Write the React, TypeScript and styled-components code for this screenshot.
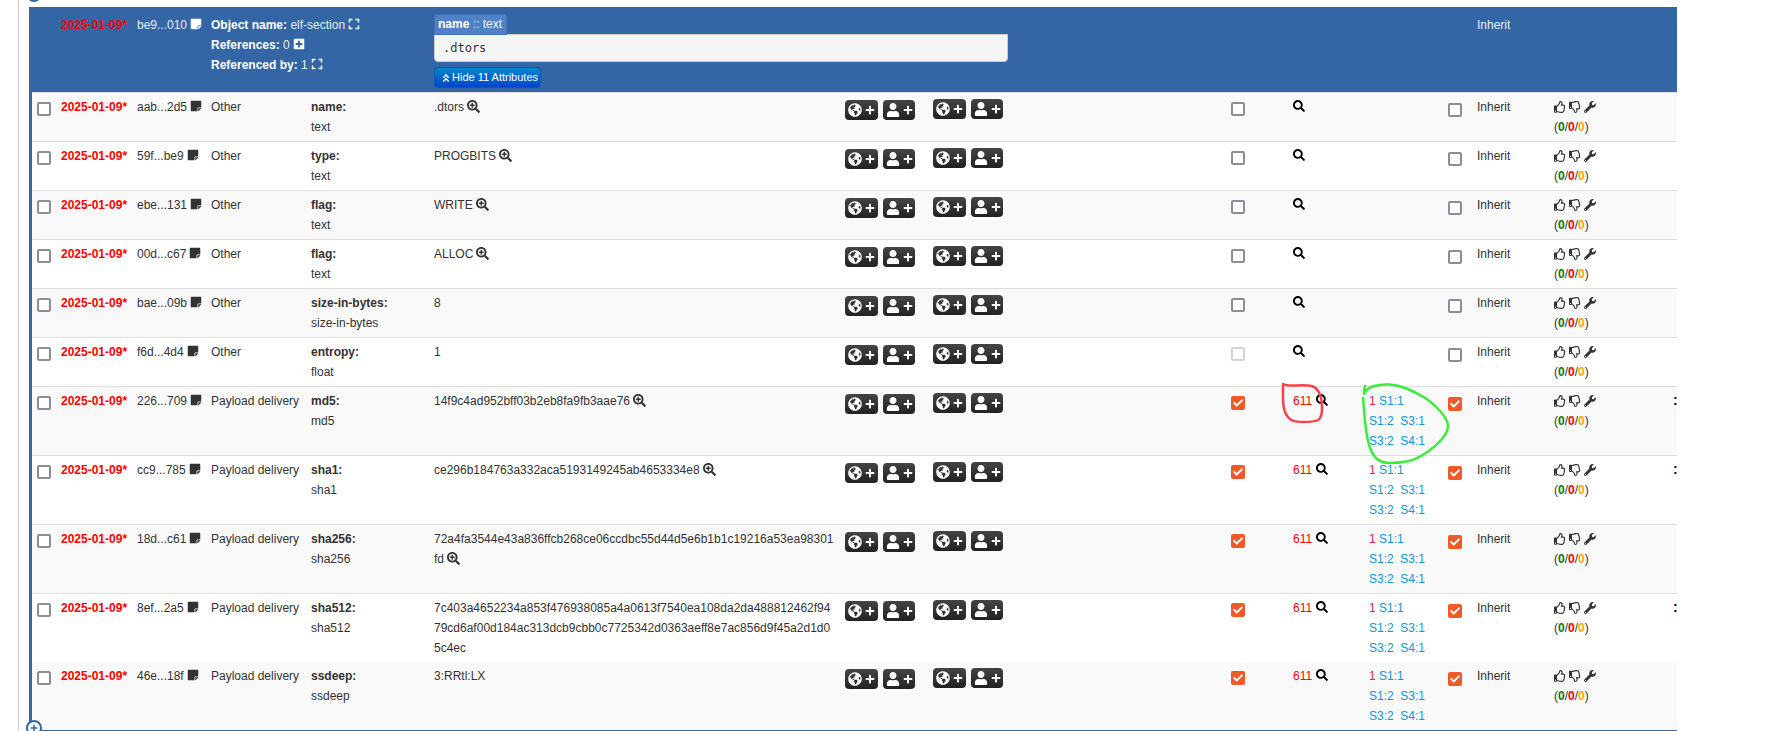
import React from "react";
import styled, { createGlobalStyle, css } from "styled-components";
import {
  FaStickyNote,
  FaSearchPlus,
  FaSearch,
  FaGlobeAmericas,
  FaUser,
  FaPlus,
  FaCheck,
  FaRegThumbsUp,
  FaRegThumbsDown,
  FaWrench,
  FaExpand,
  FaPlusSquare,
  FaAngleDoubleUp,
} from "react-icons/fa";

const BLUE = "#3465a4";

const Global = createGlobalStyle`
  html, body { margin: 0; padding: 0; height: 100%; overflow: hidden; background: #fff; }
  body { font: 12px/20px "Liberation Sans", Arial, sans-serif; color: #333; }
  * { box-sizing: border-box; }
`;

const Page = styled.div`
  position: relative;
  height: 731px;
  padding-left: 18px;
  overflow: hidden;
`;

const Rail = styled.div`
  height: 100%;
  padding: 7px 0 0 10px;
  border-left: 1px solid #ccc;
`;

const Table = styled.div`
  position: relative;
  width: 1648px;
  height: 724px;
  border-left: 3px solid ${BLUE};
  border-bottom: 1px solid ${BLUE};
`;

const COLUMNS = "29px 76px 74px 100px 123px 411px 88px 298px 62px 76px 79px 29px 77px 120px 3px";

const HeaderRow = styled.div`
  display: grid;
  grid-template-columns: ${COLUMNS};
  height: 85px;
  margin-left: -3px;
  padding-left: 3px;
  width: 1648px;
  background: ${BLUE};
  color: #fff;
`;

const HeaderCell = styled.div<{ $span?: number }>`
  padding-top: 8px;
  grid-column: span ${(p) => p.$span ?? 1};
`;

const HeaderAttr = styled.div`
  grid-column: span 7;
  padding-top: 7px;
  display: flex;
  flex-direction: column;
  align-items: flex-start;
`;

const Pill = styled.div`
  height: 21px;
  padding: 0 5px 0 4px;
  line-height: 20px;
  background: #4f81c7;
  border-radius: 4px 4px 0 0;
  box-shadow: inset 0 0 0 1px #4674b4;
  color: #eef3fa;
  position: relative;
  z-index: 1;
  b { color: #fff; }
`;

const AttrValue = styled.div`
  width: 574px;
  height: 28px;
  margin-top: -1px;
  padding: 0 8px;
  background: #f5f5f5;
  border: 1px solid #ccc;
  border-radius: 0 0 4px 4px;
  font: 12px/26px "DejaVu Sans Mono", monospace;
  color: #333;
`;

const HideButton = styled.div`
  display: flex;
  align-items: center;
  gap: 1px;
  width: 107px;
  height: 21px;
  margin-top: 5px;
  padding-left: 6px;
  border: 1px solid #0a58b0;
  border-radius: 4px;
  background: linear-gradient(#0088cc, #0044cc);
  color: #fff;
  font-size: 11px;
  line-height: 19px;
  white-space: nowrap;
  svg { flex: none; width: 10px; height: 10px; }
`;

const DimText = styled.span`
  color: #e8edf5;
`;

const HeaderIcon = styled.span`
  display: inline-block;
  margin-left: 3px;
  vertical-align: -1px;
  color: #fff;
  svg { display: block; width: 12px; height: 12px; }
`;

const Rows = styled.div`
  overflow: hidden;
  height: 638px;
`;

const Row = styled.div<{ $odd: boolean; $flat?: boolean }>`
  display: grid;
  grid-template-columns: ${COLUMNS};
  padding: 4px 0;
  border-top: ${(p) => (p.$flat ? "none" : "1px solid #ddd")};
  background: ${(p) => (p.$odd ? "#f9f9f9" : "#fff")};
`;

const Cell = styled.div``;

const BoxCell = styled.div<{ $inset?: number }>`
  padding-left: ${(p) => p.$inset ?? 0}px;
`;

const Check = styled.span<{ $state: "off" | "on" | "disabled"; $top?: number }>`
  display: flex;
  align-items: center;
  justify-content: center;
  width: 14px;
  height: 14px;
  margin-top: ${(p) => p.$top ?? 5}px;
  border-radius: 2px;
  ${(p) =>
    p.$state === "on"
      ? css`
          background: #f05a28;
          color: #fff;
          svg { width: 10px; height: 10px; }
        `
      : css`
          background: #fff;
          border: 2px solid ${p.$state === "off" ? "#8e8c9a" : "#d4d4d8"};
        `}
`;

const DateText = styled.span`
  color: #f00;
  font-weight: bold;
`;

const Uuid = styled.div`
  white-space: nowrap;
`;

const NoteIcon = styled(FaStickyNote)`
  width: 12px;
  height: 12px;
  margin-left: 3px;
  vertical-align: -1px;
  color: #333;
`;

const WhiteNote = styled(NoteIcon)`
  color: #fff;
`;

const Value = styled.div`
  padding-right: 10px;
  word-break: break-all;
`;

const Zoom = styled(FaSearchPlus)`
  width: 13px;
  height: 13px;
  margin-left: 3px;
  vertical-align: -2px;
  color: #333;
`;

const TagGroup = styled.div<{ $top: number }>`
  display: flex;
  gap: 5px;
  margin-top: ${(p) => p.$top}px;
`;

const TagButton = styled.span`
  display: flex;
  align-items: center;
  justify-content: center;
  gap: 3px;
  width: 32px;
  height: 20px;
  border-radius: 4px;
  background: linear-gradient(#444, #222);
  color: #fff;
  &:first-child { width: 33px; }
`;

const TagIcon = styled.span`
  display: flex;
  svg { width: 14px; height: 14px; }
`;

const TagPlus = styled(FaPlus)`
  width: 10px;
  height: 10px;
`;

const Count = styled.span`
  color: #f00;
  margin-right: 4px;
`;

const Lens = styled(FaSearch)`
  width: 12px;
  height: 12px;
  vertical-align: -1px;
  color: #000;
`;

const Sighting = styled.span`
  color: #0f96dc;
`;

const SightRed = styled.span`
  color: #f02050;
`;

const Vote = styled.div`
  display: flex;
  gap: 3px;
  height: 20px;
  align-items: center;
  color: #333;
  svg { width: 12px; height: 12px; }
`;

const Tally = styled.div``;

const Num = styled.b<{ $c: string }>`
  color: ${(p) => p.$c};
`;

const Sliver = styled.div`
  font-weight: bold;
  font-size: 14px;
  color: #111;
  margin-left: -1px;
  line-height: 18px;
`;

const Toggle = styled.span<{ $y: number }>`
  position: absolute;
  left: 26px;
  top: ${(p) => p.$y}px;
  width: 16px;
  height: 16px;
  border: 2px solid #2f6aa5;
  border-radius: 50%;
  background: #fff;
  display: flex;
  align-items: center;
  justify-content: center;
  color: ${BLUE};
  svg { width: 8px; height: 8px; }
`;

const Scribble = styled.svg`
  position: absolute;
  left: 0;
  top: 0;
  width: 1769px;
  height: 731px;
  pointer-events: none;
  fill: none;
  stroke-width: 2.5;
  stroke-linecap: round;
  stroke-linejoin: round;
`;

type Attr = {
  uuid: string;
  cat: string;
  name: string;
  type: string;
  value: string;
  hit?: boolean;
  zoom?: boolean;
  sliver?: boolean;
  disabled?: boolean;
};

const attrs: Attr[] = [
  { uuid: "aab...2d5", cat: "Other", name: "name:", type: "text", value: ".dtors", zoom: true },
  { uuid: "59f...be9", cat: "Other", name: "type:", type: "text", value: "PROGBITS", zoom: true },
  { uuid: "ebe...131", cat: "Other", name: "flag:", type: "text", value: "WRITE", zoom: true },
  { uuid: "00d...c67", cat: "Other", name: "flag:", type: "text", value: "ALLOC", zoom: true },
  { uuid: "bae...09b", cat: "Other", name: "size-in-bytes:", type: "size-in-bytes", value: "8" },
  { uuid: "f6d...4d4", cat: "Other", name: "entropy:", type: "float", value: "1", disabled: true },
  { uuid: "226...709", cat: "Payload delivery", name: "md5:", type: "md5", value: "14f9c4ad952bff03b2eb8fa9fb3aae76", hit: true, zoom: true, sliver: true },
  { uuid: "cc9...785", cat: "Payload delivery", name: "sha1:", type: "sha1", value: "ce296b184763a332aca5193149245ab4653334e8", hit: true, zoom: true, sliver: true },
  { uuid: "18d...c61", cat: "Payload delivery", name: "sha256:", type: "sha256", value: "72a4fa3544e43a836ffcb268ce06ccdbc55d44d5e6b1b1c19216a53ea98301fd", hit: true, zoom: true },
  { uuid: "8ef...2a5", cat: "Payload delivery", name: "sha512:", type: "sha512", value: "7c403a4652234a853f476938085a4a0613f7540ea108da2da488812462f9479cd6af00d184ac313dcb9cbb0c7725342d0363aeff8e7ac856d9f45a2d1d05c4ec", hit: true, sliver: true },
  { uuid: "46e...18f", cat: "Payload delivery", name: "ssdeep:", type: "ssdeep", value: "3:RRtl:LX", hit: true },
];

const smooth = (pts: number[][]) => {
  let d = `M${pts[0][0]} ${pts[0][1]}`;
  for (let i = 1; i < pts.length - 1; i++) {
    const mx = (pts[i][0] + pts[i + 1][0]) / 2;
    const my = (pts[i][1] + pts[i + 1][1]) / 2;
    d += ` Q${pts[i][0]} ${pts[i][1]} ${mx} ${my}`;
  }
  const last = pts[pts.length - 1];
  return `${d} L${last[0]} ${last[1]}`;
};

const redLoop = [[1283, 384], [1286, 386], [1307, 385], [1316, 387], [1322, 398], [1322, 418], [1314, 422], [1294, 422], [1287, 417], [1283, 407], [1283, 384]];
const greenLoop = [[1365, 386], [1363, 397], [1367, 388], [1381, 384], [1398, 385], [1415, 392], [1432, 402], [1448, 420], [1448, 432], [1435, 447], [1415, 460], [1398, 463], [1381, 463], [1371, 453], [1366, 433], [1363, 398]];

const Tags = ({ top }: { top: number }) => (
  <TagGroup $top={top}>
    <TagButton>
      <TagIcon><FaGlobeAmericas /></TagIcon>
      <TagPlus />
    </TagButton>
    <TagButton>
      <TagIcon><FaUser /></TagIcon>
      <TagPlus />
    </TagButton>
  </TagGroup>
);

const AttributeRow = ({ a, index }: { a: Attr; index: number }) => (
  <Row $odd={index % 2 === 0} $flat={index === attrs.length - 1}>
    <BoxCell $inset={5}><Check $state="off" /></BoxCell>
    <Cell><DateText>2025-01-09*</DateText></Cell>
    <Uuid>{a.uuid}<NoteIcon /></Uuid>
    <Cell>{a.cat}</Cell>
    <Cell>
      <div><b>{a.name}</b></div>
      <div>{a.type}</div>
    </Cell>
    <Value>
      {a.value}
      {a.zoom && <Zoom />}
    </Value>
    <Tags top={3} />
    <Tags top={2} />
    <BoxCell>
      <Check $state={a.hit ? "on" : a.disabled ? "disabled" : "off"}>{a.hit && <FaCheck />}</Check>
    </BoxCell>
    <Cell>
      {a.hit && <Count>611</Count>}
      <Lens />
    </Cell>
    <Cell>
      {a.hit && (
        <>
          <div><SightRed>1</SightRed> <Sighting>S1:1</Sighting></div>
          <div><Sighting>S1:2&nbsp;&nbsp;S3:1</Sighting></div>
          <div><Sighting>S3:2&nbsp;&nbsp;S4:1</Sighting></div>
        </>
      )}
    </Cell>
    <BoxCell>
      <Check $state={a.hit ? "on" : "off"} $top={6}>{a.hit && <FaCheck />}</Check>
    </BoxCell>
    <Cell>Inherit</Cell>
    <Cell>
      <Vote><FaRegThumbsUp /><FaRegThumbsDown /><FaWrench /></Vote>
      <Tally>
        (<Num $c="#008000">0</Num>/<Num $c="#f00">0</Num>/<Num $c="#ffa500">0</Num>)
      </Tally>
    </Cell>
    <Sliver>{a.sliver ? ":" : ""}</Sliver>
  </Row>
);

export default function App() {
  return (
    <Page>
      <Global />
      <Rail>
        <Table>
          <HeaderRow>
            <HeaderCell />
            <HeaderCell><DateText>2025-01-09*</DateText></HeaderCell>
            <HeaderCell><DimText>be9...010</DimText><WhiteNote /></HeaderCell>
            <HeaderCell $span={2}>
              <div><b>Object name:</b> <DimText>elf-section</DimText><HeaderIcon><FaExpand /></HeaderIcon></div>
              <div><b>References:</b> <DimText>0</DimText><HeaderIcon><FaPlusSquare /></HeaderIcon></div>
              <div><b>Referenced by:</b> <DimText>1</DimText><HeaderIcon><FaExpand /></HeaderIcon></div>
            </HeaderCell>
            <HeaderAttr>
              <Pill><b>name</b> :: text</Pill>
              <AttrValue>.dtors</AttrValue>
              <HideButton><FaAngleDoubleUp />Hide 11 Attributes</HideButton>
            </HeaderAttr>
            <HeaderCell $span={3}><DimText>Inherit</DimText></HeaderCell>
          </HeaderRow>
          <Rows>
            {attrs.map((a, i) => (
              <AttributeRow key={a.uuid} a={a} index={i} />
            ))}
          </Rows>
        </Table>
      </Rail>
      <Toggle $y={-14}><FaPlus /></Toggle>
      <Toggle $y={720}><FaPlus /></Toggle>
      <Scribble viewBox="0 0 1769 731">
        <path d={smooth(redLoop)} stroke="#f8434a" />
        <path d={smooth(greenLoop)} stroke="#38ee38" />
      </Scribble>
    </Page>
  );
}
